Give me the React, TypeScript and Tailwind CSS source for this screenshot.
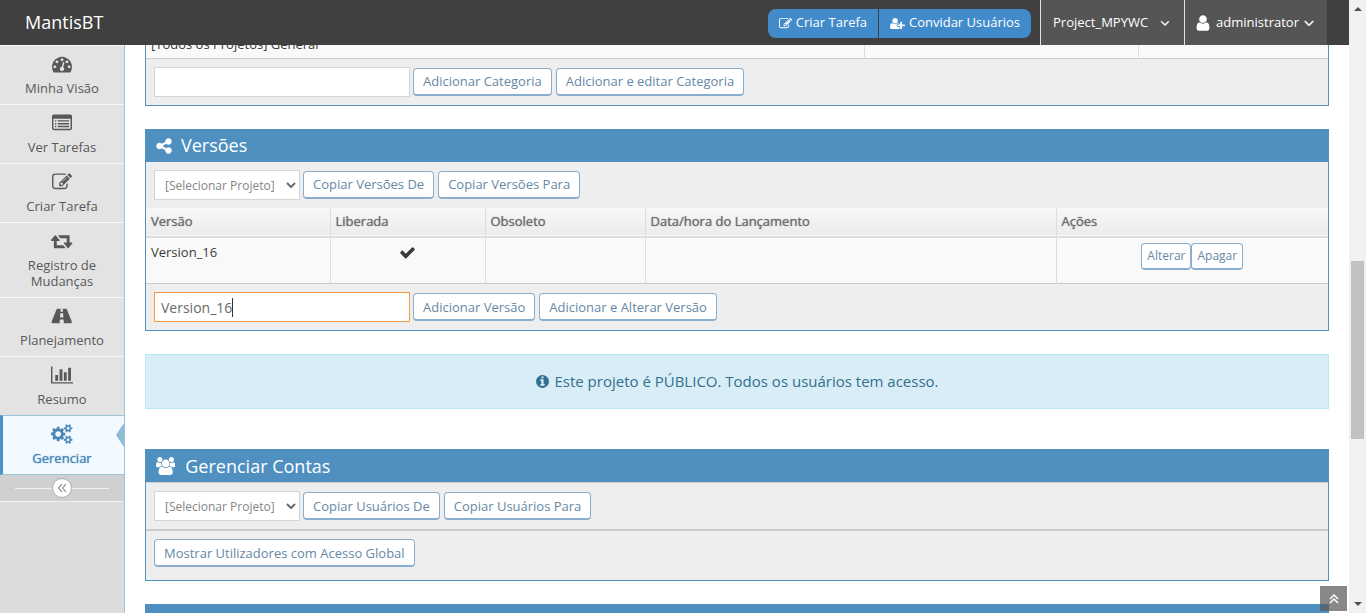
import React from "react";

type Glyph = { w: number; d: string };

const DOT =
  "q0-53-37.5-90.5t-90.5-37.5-90.5 37.5-37.5 90.5 37.5 90.5 90.5 37.5 90.5-37.5 37.5-90.5z";
const SMALL_COG =
  "v140q0 16-149 31-12 27-30 52 51 113 51 138 0 4-4 7-122 71-124 71-8 0-46-47t-52-68q-20 2-30 2t-30-2q-14 21-52 68t-46 47q-2 0-124-71-4-3-4-7 0-25 51-138-18-25-30-52-149-15-149-31v-140q0-16 149-31 13-29 30-52-51-113-51-138 0-4 4-7 4-2 35-20t59-34 30-16q8 0 46 46.5t52 67.5q20-2 30-2t30 2q51-71 92-112l6-2q4 0 124 70 4 3 4 7 0 25-51 138 17 23 30 52 149 15 149 31z";

const glyphs = {
  dashboard: {
    w: 1792,
    d: `M384 1152${DOT}m192-448${DOT}m428 481l101-382q6-26-7.5-48.5t-38.5-29.5-48 6.5-30 39.5l-101 382q-60 5-107 43.5t-63 98.5q-20 77 20 146t117 89 146-20 89-117q16-60-6-117t-72-91zm660-33${DOT}m-640-640${DOT}m448 192${DOT}m320 448q0 261-141 483-19 29-54 29h-1402q-35 0-54-29-141-221-141-483 0-182 71-348t191-286 286-191 348-71 348 71 286 191 191 286 71 348z`,
  },
  list: {
    w: 1792,
    d: "M160 128h1472q66 0 113 47t47 113v1088q0 66-47 113t-113 47h-1472q-66 0-113-47t-47-113v-1088q0-66 47-113t113-47zM128 512v864q0 13 9.5 22.5t22.5 9.5h1472q13 0 22.5-9.5t9.5-22.5v-864zM256 640v128h128v-128zM512 640v128h1024v-128zM256 896v128h128v-128zM512 896v128h1024v-128zM256 1152v128h128v-128zM512 1152v128h1024v-128z",
  },
  edit: {
    w: 1792,
    d: "M888 1184l116-116-152-152-116 116v56h96v96h56zm440-720q-16-16-33 1l-350 350q-17 17-1 33t33-1l350-350q17-17 1-33zm80 594v190q0 119-84.5 203.5t-203.5 84.5h-832q-119 0-203.5-84.5t-84.5-203.5v-832q0-119 84.5-203.5t203.5-84.5h832q63 0 117 25 15 7 18 23 3 17-9 29l-49 49q-14 14-32 8-23-6-45-6h-832q-66 0-113 47t-47 113v832q0 66 47 113t113 47h832q66 0 113-47t47-113v-126q0-13 9-22l64-64q15-15 35-7t20 29zm-96-738l288 288-672 672h-288v-288zm444 132l-92 92-288-288 92-92q28-28 68-28t68 28l152 152q28 28 28 68t-28 68z",
  },
  retweet: {
    w: 1920,
    d: "M1280 1504q0 13-9.5 22.5t-22.5 9.5h-960q-8 0-13.5-2t-9-7-5.5-8-3-11.5-1-11.5v-600h-192q-26 0-45-19t-19-45q0-24 15-41l320-384q19-22 49-22t49 22l320 384q15 17 15 41 0 26-19 45t-45 19h-192v384h576q16 0 25 11l160 192q7 10 7 21zm640-416q0 24-15 41l-320 384q-20 23-49 23t-49-23l-320-384q-15-17-15-41 0-26 19-45t45-19h192v-384h-576q-16 0-25-12l-160-192q-7-9-7-20 0-13 9.5-22.5t22.5-9.5h960q8 0 13.5 2t9 7 5.5 8 3 11.5 1 11.5v600h192q26 0 45 19t19 45z",
  },
  road: {
    w: 1920,
    d: "M1111 996v-4l-24-320q-1-13-11-22.5t-23-9.5h-186q-13 0-23 9.5t-11 22.5l-24 320v4q-1 12 8 20t21 8h244q12 0 21-8t8-20zm759 467q0 73-46 73h-704q13 0 22-9.5t8-22.5l-20-256q-1-13-11-22.5t-23-9.5h-272q-13 0-23 9.5t-11 22.5l-20 256q-1 13 8 22.5t22 9.5h-704q-46 0-46-73 0-54 26-116l417-1044q8-19 26-33t38-14h339q-13 0-23 9.5t-11 22.5l-15 192q-1 14 8 23t22 9h166q13 0 22-9t8-23l-15-192q-1-13-11-22.5t-23-9.5h339q20 0 38 14t26 33l417 1044q26 62 26 116z",
  },
  chart: {
    w: 2048,
    d: "M640 896v512h-256v-512h256zm384-512v1024h-256v-1024h256zm1024 1152v128h-2048v-1536h128v1408h1920zm-640-896v768h-256v-768h256zm384-384v1152h-256v-1152h256z",
  },
  cogs: {
    w: 1920,
    d: `M896 896q0-106-75-181t-181-75-181 75-75 181 75 181 181 75 181-75 75-181zm768 512q0-52-38-90t-90-38-90 38-38 90q0 53 37.5 90.5t90.5 37.5 90.5-37.5 37.5-90.5zm0-1024q0-52-38-90t-90-38-90 38-38 90q0 53 37.5 90.5t90.5 37.5 90.5-37.5 37.5-90.5zm-384 421v185q0 10-7 19.5t-16 10.5l-155 24q-11 35-32 76 34 48 90 115 7 11 7 20 0 12-7 19-23 30-82.5 89.5t-78.5 59.5q-11 0-21-7l-115-90q-37 19-77 31-11 108-23 155-7 24-30 24h-186q-11 0-20-7.5t-10-17.5l-23-153q-34-10-75-31l-118 89q-7 7-20 7-11 0-21-8-144-133-144-160 0-9 7-19 10-14 41-53t47-61q-23-44-35-82l-152-24q-10-1-17-9.5t-7-19.5v-185q0-10 7-19.5t16-10.5l155-24q11-35 32-76-34-48-90-115-7-11-7-20 0-12 7-20 22-30 82-89t79-59q11 0 21 7l115 90q34-18 77-32 11-108 23-154 7-24 30-24h186q11 0 20 7.5t10 17.5l23 153q34 10 75 31l118-89q8-7 20-7 11 0 21 8 144 133 144 160 0 8-7 19-12 16-42 54t-45 60q23 48 34 82l152 23q10 2 17 10.5t7 19.5zm640 533${SMALL_COG}m0-1024${SMALL_COG}`,
  },
  share: {
    w: 1792,
    d: "M1344 1024q133 0 226.5 93.5t93.5 226.5-93.5 226.5-226.5 93.5-226.5-93.5-93.5-226.5q0-12 2-34l-360-180q-92 86-218 86-133 0-226.5-93.5t-93.5-226.5 93.5-226.5 226.5-93.5q126 0 218 86l360-180q-2-22-2-34 0-133 93.5-226.5t226.5-93.5 226.5 93.5 93.5 226.5-93.5 226.5-226.5 93.5q-126 0-218-86l-360 180q2 22 2 34t-2 34l360 180q92-86 218-86z",
  },
  users: {
    w: 1920,
    d: "M593 896q-162 5-265 128h-134q-82 0-138-40.5t-56-118.5q0-353 124-353 6 0 43.5 21t97.5 42.5 119 21.5q67 0 133-23-5 37-5 66 0 139 81 256zm1071 637q0 120-73 189.5t-194 69.5h-874q-121 0-194-69.5t-73-189.5q0-53 3.5-103.5t14-109 26.5-108.5 43-97.5 62-81 85.5-53.5 111.5-20q10 0 43 21.5t73 48 107 48 135 21.5 135-21.5 107-48 73-48 43-21.5q61 0 111.5 20t85.5 53.5 62 81 43 97.5 26.5 108.5 14 109 3.5 103.5zm-1024-1277q0 106-75 181t-181 75-181-75-75-181 75-181 181-75 181 75 75 181zm704 384q0 159-112.5 271.5t-271.5 112.5-271.5-112.5-112.5-271.5 112.5-271.5 271.5-112.5 271.5 112.5 112.5 271.5zm576 225q0 78-56 118.5t-138 40.5h-134q-103-123-265-128 81-117 81-256 0-29-5-66 66 23 133 23 59 0 119-21.5t97.5-42.5 43.5-21q124 0 124 353zm-128-609q0 106-75 181t-181 75-181-75-75-181 75-181 181-75 181 75 75 181z",
  },
  info: {
    w: 1792,
    d: "M1152 1376v-160q0-14-9-23t-23-9h-96v-512q0-14-9-23t-23-9h-320q-14 0-23 9t-9 23v160q0 14 9 23t23 9h96v320h-96q-14 0-23 9t-9 23v160q0 14 9 23t23 9h448q14 0 23-9t9-23zm-128-896v-160q0-14-9-23t-23-9h-192q-14 0-23 9t-9 23v160q0 14 9 23t23 9h192q14 0 23-9t9-23zm640 416q0 209-103 385.5t-279.5 279.5-385.5 103-385.5-103-279.5-279.5-103-385.5 103-385.5 279.5-279.5 385.5-103 385.5 103 279.5 279.5 103 385.5z",
  },
  check: {
    w: 1792,
    d: "M1671 566q0 40-28 68l-724 724-136 136q-28 28-68 28t-68-28l-136-136-362-362q-28-28-28-68t28-68l136-136q28-28 68-28t68 28l294 295 656-657q28-28 68-28t68 28l136 136q28 28 28 68z",
  },
  user: {
    w: 1792,
    d: "M1536 1399q0 109-62.5 187t-150.5 78h-854q-88 0-150.5-78t-62.5-187q0-85 8.5-160.5t31.5-152 58.5-131 94-89 134.5-34.5q131 128 313 128t313-128q76 0 134.5 34.5t94 89 58.5 131 31.5 152 8.5 160.5zm-256-887q0 159-112.5 271.5t-271.5 112.5-271.5-112.5-112.5-271.5 112.5-271.5 271.5-112.5 271.5 112.5 112.5 271.5z",
  },
  userPlus: {
    w: 2048,
    d: "M704 896q-159 0-271.5-112.5t-112.5-271.5 112.5-271.5 271.5-112.5 271.5 112.5 112.5 271.5-112.5 271.5-271.5 112.5zm960 128h352q13 0 22.5 9.5t9.5 22.5v192q0 13-9.5 22.5t-22.5 9.5h-352v352q0 13-9.5 22.5t-22.5 9.5h-192q-13 0-22.5-9.5t-9.5-22.5v-352h-352q-13 0-22.5-9.5t-9.5-22.5v-192q0-13 9.5-22.5t22.5-9.5h352v-352q0-13 9.5-22.5t22.5-9.5h192q13 0 22.5 9.5t9.5 22.5v352zm-736 224q0 52 38 90t90 38h256v238q-68 50-171 50h-874q-121 0-194-69t-73-190q0-53 3.5-103.5t14-109 26.5-108.5 43-97.5 62-81 85.5-53.5 111.5-20q19 0 39 17 79 61 154.5 91.5t164.5 30.5 164.5-30.5 154.5-91.5q20-17 39-17 132 0 217 96h-223q-52 0-90 38t-38 90v192z",
  },
  angleDown: {
    w: 1792,
    d: "M1395 736q0 13-10 23l-466 466q-10 10-23 10t-23-10l-466-466q-10-10-10-23t10-23l50-50q10-10 23-10t23 10l393 393 393-393q10-10 23-10t23 10l50 50q10 10 10 23z",
  },
} satisfies Record<string, Glyph>;

function Icon({ name, className }: { name: keyof typeof glyphs; className: string }) {
  const g = glyphs[name];
  return (
    <svg
      viewBox={`0 0 ${g.w} 1792`}
      className={`shrink-0 ${className}`}
      fill="currentColor"
      fillRule={name === "list" ? "evenodd" : "nonzero"}
      stroke={name === "angleDown" ? "currentColor" : "none"}
      strokeWidth={60}
      aria-hidden="true"
    >
      <path d={g.d} />
    </svg>
  );
}

const menu: { icon: keyof typeof glyphs; label: string; active?: boolean }[] = [
  { icon: "dashboard", label: "Minha Visão" },
  { icon: "list", label: "Ver Tarefas" },
  { icon: "edit", label: "Criar Tarefa" },
  { icon: "retweet", label: "Registro de Mudanças" },
  { icon: "road", label: "Planejamento" },
  { icon: "chart", label: "Resumo" },
  { icon: "cogs", label: "Gerenciar", active: true },
];

function Btn({ children, small = false }: { children: React.ReactNode; small?: boolean }) {
  return (
    <button
      type="button"
      className={`rounded border border-b-2 border-[#8aafce] bg-white text-[#6688a6] ${
        small ? "h-[27px] px-[5px] text-[12px] leading-[22px]" : "h-7 px-[9px] text-[13px] leading-6"
      }`}
    >
      {children}
    </button>
  );
}

function BtnGroup({ children }: { children: React.ReactNode }) {
  return <div className="flex gap-1 pt-px">{children}</div>;
}

function ProjectSelect({ label }: { label: string }) {
  return (
    <div className="relative">
      <select
        aria-label={label}
        className="block h-[30px] w-[146px] appearance-none border border-[#d5d5d5] bg-white pt-0.5 pl-2.5 text-[12px] text-[#858585] outline-none"
      >
        <option>[Selecionar Projeto]</option>
      </select>
      <svg viewBox="0 0 10 6" className="pointer-events-none absolute top-3 right-1 h-1.5 w-2.5" aria-hidden="true">
        <path d="M1 1l4 4 4-4" fill="none" stroke="#6b6b6b" strokeWidth="2" />
      </svg>
    </div>
  );
}

function Title({ icon, children }: { icon: keyof typeof glyphs; children: React.ReactNode }) {
  return (
    <h2 className="flex h-8 items-center bg-[#4f90c1] pl-2.5 text-[18px] text-white">
      <Icon name={icon} className={icon === "share" ? "-ml-px mr-2 h-[18px]" : "mr-2.5 h-[18px]"} />
      {children}
    </h2>
  );
}

const card = "border border-[#4f90c1] bg-[#eee]";
const bar = "flex items-start gap-[3px] p-2";
const cell = "border-r border-[#ddd] px-[5px] last:border-r-0";
const heavy = "font-normal [text-shadow:0_0_1px_currentColor]";

export default function App() {
  return (
    <div className="flex h-screen overflow-hidden bg-white font-['Open_Sans',sans-serif] text-[13px] text-[#393939]">
      <div className="flex min-w-0 flex-1 flex-col">
        <header className="flex h-[45px] shrink-0 items-stretch bg-[#404040] pr-[22px] text-white">
          <a href="#home" className="flex flex-1 items-center pl-[25px] text-[18px]">
            MantisBT
          </a>
          <div className="mr-[9px] flex items-center gap-px pt-px">
            <a href="#report" className="flex h-[29px] items-center gap-1 rounded-l-lg bg-[#428bca] px-[11px]">
              <Icon name="edit" className="h-[13px]" />
              Criar Tarefa
            </a>
            <a href="#invite" className="flex h-[29px] items-center gap-1 rounded-r-lg bg-[#428bca] px-[11px]">
              <Icon name="userPlus" className="h-[13px]" />
              Convidar Usuários
            </a>
          </div>
          <button type="button" className="flex items-center gap-2.5 border-l border-[#e1e1e1] bg-[#555] px-3">
            Project_MPYWC
            <Icon name="angleDown" className="h-3.5" />
          </button>
          <button type="button" className="flex items-center gap-1 border-l border-[#e1e1e1] bg-[#555] pr-2.5 pl-[9px]">
            <Icon name="user" className="h-[18px]" />
            <span className="flex items-center gap-0.5">
              administrator
              <Icon name="angleDown" className="h-4" />
            </span>
          </button>
        </header>

        <div className="flex min-h-0 flex-1">
          <aside className="w-[125px] shrink-0 border-r border-[#9fc5dd] bg-[#dcdcdc]">
            <nav>
              {menu.map((m) => (
                <a
                  key={m.label}
                  href={`#${m.icon}`}
                  className={
                    m.active
                      ? "relative flex flex-col items-center gap-1.5 border-y border-l-[3px] border-y-[#9fc5dd] border-l-[#4b92cb] bg-[#f2f9ff] py-2 pr-[3px] text-[#4b88b7]"
                      : "flex flex-col items-center gap-1.5 border-t border-[#f7f7f7] bg-[#e3e3e3] py-2 text-[#585858]"
                  }
                >
                  <Icon name={m.icon} className="h-5" />
                  <span className={`w-24 text-center leading-4 ${m.active ? heavy : ""}`}>{m.label}</span>
                  {m.active && (
                    <svg viewBox="0 0 8 24" className="absolute top-[7px] right-0 h-6 w-2" aria-hidden="true">
                      <path d="M8 0v24L0 12z" fill="#91bad6" />
                    </svg>
                  )}
                </a>
              ))}
            </nav>
            <div className="flex h-[27px] items-center border-b border-[#f2f2f2] bg-[#d0d0d0] px-[15px]">
              <span className="h-px flex-1 bg-[#f2f2f2]" />
              <button type="button" aria-label="Recolher menu" className="flex h-5 w-5 items-center justify-center rounded-full border border-[#aaa] bg-white text-[#999]">
                <svg viewBox="0 0 10 10" className="h-2.5 w-2.5" fill="none" stroke="currentColor" strokeWidth="1.2" aria-hidden="true">
                  <path d="M5 1L1.500 5L5 9M9 1L5.500 5L9 9" />
                </svg>
              </button>
              <span className="h-px flex-1 bg-[#f2f2f2]" />
            </div>
          </aside>

          <main className="min-w-0 flex-1 overflow-hidden px-5">
            <section className={`-mt-4 ${card}`}>
              <table className="w-full table-fixed border-b border-[#ccc] bg-[#f9f9f9]">
                <tbody>
                  <tr className="h-7">
                    <td className={`pt-0.5 ${cell}`}>[Todos os Projetos] General</td>
                    <td className={`w-[274px] ${cell}`} />
                    <td className="w-[190px]" />
                  </tr>
                </tbody>
              </table>
              <div className={bar}>
                <input aria-label="Categoria" className="h-[30px] w-64 border border-[#d5d5d5] bg-white px-1.5 text-[14px] outline-none" />
                <BtnGroup>
                  <Btn>Adicionar Categoria</Btn>
                  <Btn>Adicionar e editar Categoria</Btn>
                </BtnGroup>
              </div>
            </section>

            <section className={`mt-[23px] ${card}`}>
              <Title icon="share">Versões</Title>
              <div className={bar}>
                <ProjectSelect label="Projeto das versões" />
                <BtnGroup>
                  <Btn>Copiar Versões De</Btn>
                  <Btn>Copiar Versões Para</Btn>
                </BtnGroup>
              </div>
              <table className="w-full table-fixed border-b border-[#ccc] bg-[#f9f9f9]">
                <thead>
                  <tr className="h-[29px] border-b-2 border-[#ddd] bg-linear-to-b from-[#f8f8f8] to-[#ececec] text-left text-[#707070]">
                    <th className={`w-[184px] ${heavy} ${cell}`}>Versão</th>
                    <th className={`w-[155px] ${heavy} ${cell}`}>Liberada</th>
                    <th className={`w-40 ${heavy} ${cell}`}>Obsoleto</th>
                    <th className={`w-[411px] ${heavy} ${cell}`}>Data/hora do Lançamento</th>
                    <th className={`${heavy} ${cell}`}>Ações</th>
                  </tr>
                </thead>
                <tbody>
                  <tr className="h-[47px] align-top">
                    <td className={`pt-[5px] ${cell}`}>Version_16</td>
                    <td className={`pt-1.5 ${cell}`}>
                      <Icon name="check" className="mx-auto h-[17px]" />
                    </td>
                    <td className={cell} />
                    <td className={cell} />
                    <td className={`pt-[5px] ${cell}`}>
                      <div className="flex justify-center">
                        <Btn small>Alterar</Btn>
                        <Btn small>Apagar</Btn>
                      </div>
                    </td>
                  </tr>
                </tbody>
              </table>
              <div className={bar}>
                <div className="relative">
                  <input
                    aria-label="Versão"
                    defaultValue="Version_16"
                    className="block h-[30px] w-64 border border-[#f59942] bg-white px-1.5 text-[14px] text-[#696969] outline-none"
                  />
                  <span className="absolute top-1.5 left-[78px] h-[19px] w-px bg-[#333]" />
                </div>
                <BtnGroup>
                  <Btn>Adicionar Versão</Btn>
                  <Btn>Adicionar e Alterar Versão</Btn>
                </BtnGroup>
              </div>
            </section>

            <div className="mt-[23px] flex h-[55px] items-center justify-center gap-1 border border-[#bce8f1] bg-[#d9edf7] text-[15px] text-[#31708f]">
              <Icon name="info" className="h-[15px]" />
              Este projeto é PÚBLICO. Todos os usuários tem acesso.
            </div>

            <section className={`mt-10 ${card}`}>
              <Title icon="users">Gerenciar Contas</Title>
              <div className={`border-t border-b-2 border-[#ccc] ${bar}`}>
                <ProjectSelect label="Projeto dos usuários" />
                <BtnGroup>
                  <Btn>Copiar Usuários De</Btn>
                  <Btn>Copiar Usuários Para</Btn>
                </BtnGroup>
              </div>
              <div className="px-2 pt-2 pb-[13px]">
                <Btn>Mostrar Utilizadores com Acesso Global</Btn>
              </div>
            </section>

            <section className={`mt-[23px] ${card}`}>
              <div className="h-8 bg-[#4f90c1]" />
            </section>
          </main>
        </div>
      </div>

      <div className="flex w-[17px] shrink-0 flex-col items-center justify-between bg-[#f1f1f1] py-[7px]" aria-hidden="true">
        <svg viewBox="0 0 8 4" className="h-1 w-2">
          <path d="M0 4L4 0l4 4z" fill="#505050" />
        </svg>
        <div className="mt-[87px] h-[178px] w-[13px] bg-[#c1c1c1]" />
        <svg viewBox="0 0 8 4" className="h-1 w-2">
          <path d="M0 0l4 4 4-4z" fill="#505050" />
        </svg>
      </div>

      <button type="button" aria-label="Voltar ao topo" className="fixed right-[19px] bottom-0.5 flex h-[25px] w-[27px] items-center justify-center bg-[#555]/70 text-white">
        <svg viewBox="0 0 10 10" className="h-2.5 w-2.5" fill="none" stroke="currentColor" strokeWidth="1.500" aria-hidden="true">
          <path d="M1 5L5 1l4 4M1 9l4-4 4 4" />
        </svg>
      </button>
    </div>
  );
}
